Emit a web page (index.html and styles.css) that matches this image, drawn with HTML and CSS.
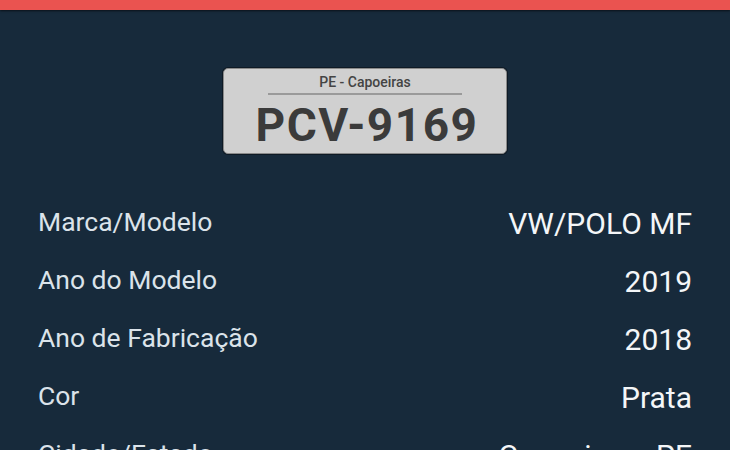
FILE: index.html
```html
<!DOCTYPE html>
<html>
<head>
  <title>Consulta Placa</title>
  <link rel="stylesheet" href="styles.css">
</head>
<body>
  <div class="top-bar"></div>

  <div class="plate-wrap">
    <div class="plate">
      <div class="plate-city">PE - Capoeiras</div>
      <div class="plate-line"></div>
      <div class="plate-number">PCV-9169</div>
    </div>
  </div>

  <div class="details">
    <div class="row">
      <span class="label">Marca/Modelo</span>
      <span class="value">VW/POLO MF</span>
    </div>
    <div class="row">
      <span class="label">Ano do Modelo</span>
      <span class="value">2019</span>
    </div>
    <div class="row">
      <span class="label">Ano de Fabricação</span>
      <span class="value">2018</span>
    </div>
    <div class="row">
      <span class="label">Cor</span>
      <span class="value">Prata</span>
    </div>
    <div class="row">
      <span class="label">Cidade/Estado</span>
      <span class="value">Capoeiras - PE</span>
    </div>
  </div>
</body>
</html>
```

FILE: styles.css
```css
body {
  font-family: Roboto, "Liberation Sans", sans-serif;
  margin: 0;
  background-color: #172a3b;
  overflow: hidden;
}
.top-bar {
  height: 10px;
  background-color: #ea5350;
  box-shadow: 0 1px 2px rgba(0,0,0,0.6);
}
.plate-wrap {
  display: flex;
  justify-content: center;
  margin-top: 58px;
}
.plate {
  width: 282px;
  height: 79px;
  padding-top: 5px;
  background-color: #d0d0d0;
  border: 1px solid #8a8a8a;
  border-radius: 5px;
  box-shadow: 0 0 0 1px #0e1a25;
  text-align: center;
  color: #3b3b3b;
}
.plate-city {
  font-size: 14px;
  font-weight: 500;
  line-height: 16px;
  color: #444;
}
.plate-line {
  height: 2px;
  background-color: #9a9a9a;
  margin: 3px 44px 0;
}
.plate-number {
  font-size: 46px;
  font-weight: 700;
  line-height: 46px;
  letter-spacing: 1.5px;
  margin-top: 7px;
  padding-left: 4px;
}
.details {
  margin-top: 38px;
  padding: 0 38px;
}
.row {
  display: flex;
  justify-content: space-between;
  align-items: center;
  height: 58px;
}
.label {
  font-size: 26.5px;
  color: #dbe3ea;
}
.value {
  font-size: 30px;
  color: #f4f6f8;
  padding-top: 4px;
}
```
